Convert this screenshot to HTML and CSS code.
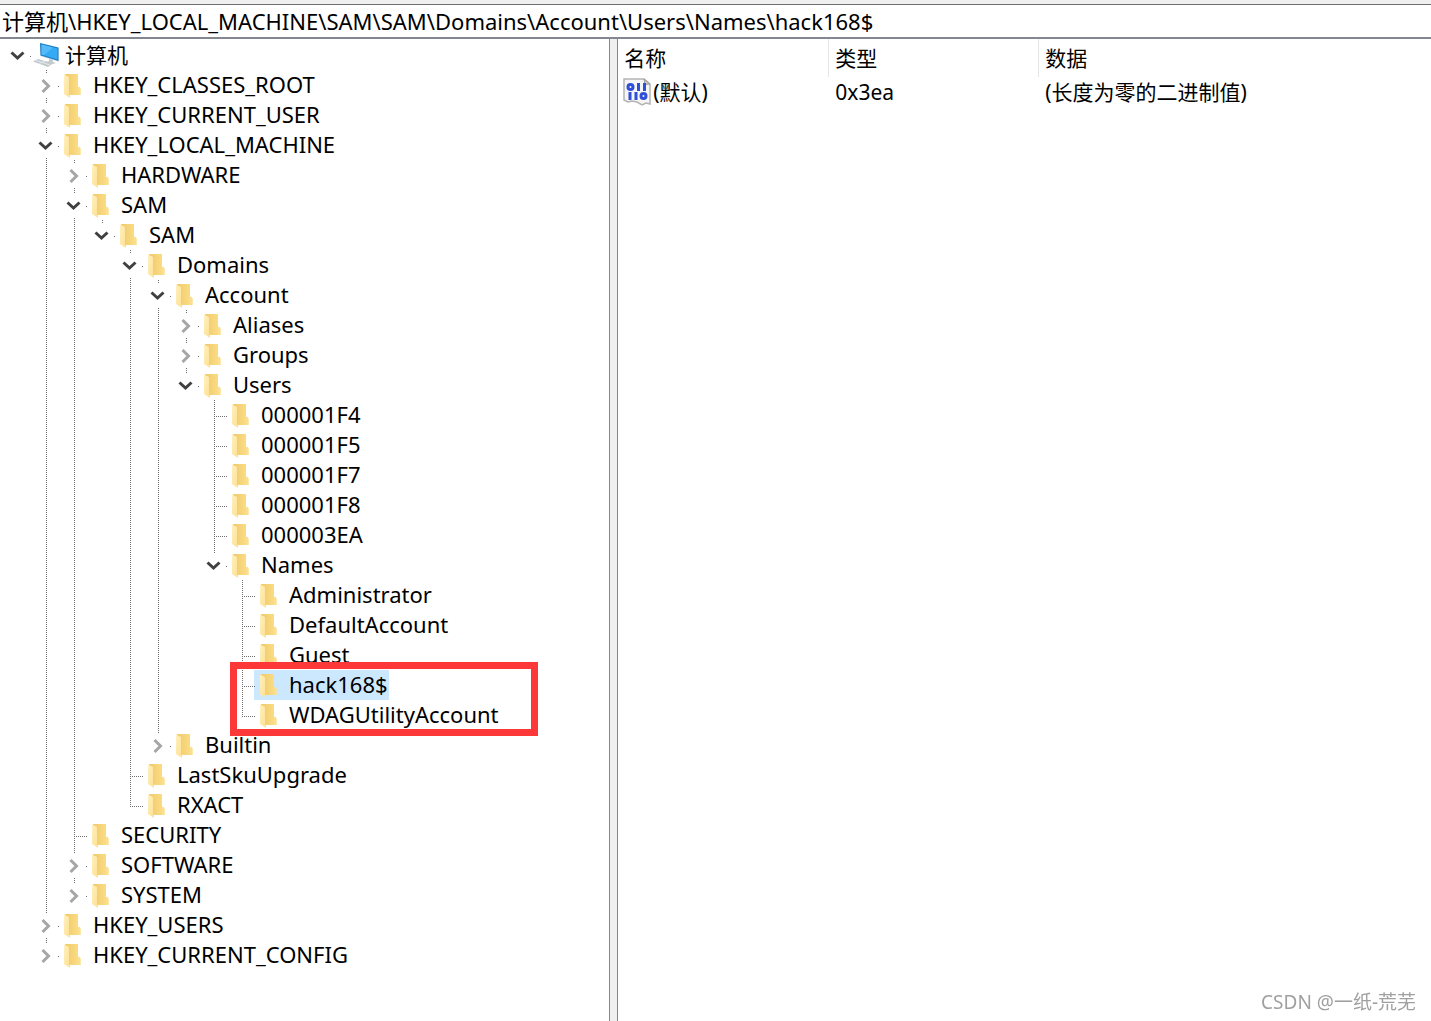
FILE: index.html
```html
<!DOCTYPE html>
<html lang="zh-CN">
<head>
    <meta charset="UTF-8">
    <meta name="viewport" content="width=device-width, initial-scale=1.0">
    <title>注册表编辑器</title>
    <link rel="stylesheet" href="styles.css">
</head>
<body>
    <svg class="sprite" aria-hidden="true">
        <defs>
            <linearGradient id="front" x1="0" y1="0" x2="1" y2="1">
                <stop offset="0" stop-color="#fff0bd"/>
                <stop offset="1" stop-color="#fde092"/>
            </linearGradient>
            <linearGradient id="back" x1="0" y1="0" x2="1" y2="0">
                <stop offset="0" stop-color="#efc96c"/>
                <stop offset="1" stop-color="#fde088"/>
            </linearGradient>
        </defs>
        <symbol id="folder" viewBox="0 0 17 24">
            <path fill="url(#back)" d="M1 0H14V12.500L16.500 15V21H4Z"/>
            <path fill="#fbdf90" d="M14 14L15 12.500L16.500 14V21H14Z"/>
            <path fill="url(#front)" d="M0 .5L5 3V20.500L6 21V24L0 20Z"/>
        </symbol>
        <symbol id="open" viewBox="0 0 24 24">
            <path fill="none" stroke="#404040" stroke-width="3" d="M5.500 8.500L11.500 14L17.500 8.500"/>
        </symbol>
        <symbol id="closed" viewBox="0 0 24 24">
            <path fill="none" stroke="#a6a6a6" stroke-width="3" d="M8.500 6L14.500 12L8.500 18"/>
        </symbol>
        <symbol id="computer" viewBox="0 0 26 25">
            <path fill="#dde3e6" d="M7 0L26 5V19L7 13Z"/>
            <path fill="#1d7fc4" d="M7 0L25.500 4.500V18L7.500 12.500Z"/>
            <path fill="#35aaf5" d="M8.500 1.500L24.500 5.500V16.500L8.500 11.500Z"/>
            <path fill="#55bafa" d="M8.500 1.500L20 4.500L11 12.200L8.500 11.500Z"/>
            <path fill="#c3cbcf" d="M16 15.500L20 17V19L23 20L20 21L13 19L16 18Z"/>
            <path fill="#c0c8cc" d="M0 18.500L5 16L20 20.500L15 24Z"/>
            <path fill="none" stroke="#e4e8ea" stroke-width="1" d="M3 17.500L17 22M6 20.500L12 18"/>
        </symbol>
        <symbol id="binary" viewBox="0 0 28 28">
            <path fill="#f5f5f5" stroke="#b4b4b4" stroke-width="1.500" d="M1 1H21L27 6V26L23 25L19 27L14 24L9 23L5 24L1 22Z"/>
            <path fill="#c6c6c6" stroke="#9a9a9a" d="M21 1L22 6.500L27 6Z"/>
            <g fill="none" stroke="#2f4fd8" stroke-width="3">
                <ellipse cx="7.500" cy="9" rx="2.500" ry="2.500"/>
                <path d="M15.500 5V13M21.500 5V13M7 14V22M13 14V22"/>
                <ellipse cx="20.500" cy="18" rx="2.500" ry="2.500"/>
            </g>
        </symbol>
    </svg>

    <div class="window">
        <input class="address" type="text" aria-label="地址" value="计算机\HKEY_LOCAL_MACHINE\SAM\SAM\Domains\Account\Users\Names\hack168$">

        <div class="panes">
            <nav class="tree">
                <ul>
                    <li class="root">
                        <div class="row"><button class="toggle" aria-label="计算机"><svg><use href="#open"/></svg></button><span class="label"><svg class="computer"><use href="#computer"/></svg>计算机</span></div>
                        <ul>
                            <li><div class="row"><button class="toggle" aria-label="HKEY_CLASSES_ROOT"><svg><use href="#closed"/></svg></button><span class="label"><svg class="folder"><use href="#folder"/></svg>HKEY_CLASSES_ROOT</span></div></li>
                            <li><div class="row"><button class="toggle" aria-label="HKEY_CURRENT_USER"><svg><use href="#closed"/></svg></button><span class="label"><svg class="folder"><use href="#folder"/></svg>HKEY_CURRENT_USER</span></div></li>
                            <li>
                                <div class="row"><button class="toggle" aria-label="HKEY_LOCAL_MACHINE"><svg><use href="#open"/></svg></button><span class="label"><svg class="folder"><use href="#folder"/></svg>HKEY_LOCAL_MACHINE</span></div>
                                <ul>
                                    <li><div class="row"><button class="toggle" aria-label="HARDWARE"><svg><use href="#closed"/></svg></button><span class="label"><svg class="folder"><use href="#folder"/></svg>HARDWARE</span></div></li>
                                    <li>
                                        <div class="row"><button class="toggle" aria-label="SAM"><svg><use href="#open"/></svg></button><span class="label"><svg class="folder"><use href="#folder"/></svg>SAM</span></div>
                                        <ul>
                                            <li>
                                                <div class="row"><button class="toggle" aria-label="SAM"><svg><use href="#open"/></svg></button><span class="label"><svg class="folder"><use href="#folder"/></svg>SAM</span></div>
                                                <ul>
                                                    <li>
                                                        <div class="row"><button class="toggle" aria-label="Domains"><svg><use href="#open"/></svg></button><span class="label"><svg class="folder"><use href="#folder"/></svg>Domains</span></div>
                                                        <ul>
                                                            <li>
                                                                <div class="row"><button class="toggle" aria-label="Account"><svg><use href="#open"/></svg></button><span class="label"><svg class="folder"><use href="#folder"/></svg>Account</span></div>
                                                                <ul>
                                                                    <li><div class="row"><button class="toggle" aria-label="Aliases"><svg><use href="#closed"/></svg></button><span class="label"><svg class="folder"><use href="#folder"/></svg>Aliases</span></div></li>
                                                                    <li><div class="row"><button class="toggle" aria-label="Groups"><svg><use href="#closed"/></svg></button><span class="label"><svg class="folder"><use href="#folder"/></svg>Groups</span></div></li>
                                                                    <li>
                                                                        <div class="row"><button class="toggle" aria-label="Users"><svg><use href="#open"/></svg></button><span class="label"><svg class="folder"><use href="#folder"/></svg>Users</span></div>
                                                                        <ul>
                                                                            <li><div class="row leaf"><span class="label"><svg class="folder"><use href="#folder"/></svg>000001F4</span></div></li>
                                                                            <li><div class="row leaf"><span class="label"><svg class="folder"><use href="#folder"/></svg>000001F5</span></div></li>
                                                                            <li><div class="row leaf"><span class="label"><svg class="folder"><use href="#folder"/></svg>000001F7</span></div></li>
                                                                            <li><div class="row leaf"><span class="label"><svg class="folder"><use href="#folder"/></svg>000001F8</span></div></li>
                                                                            <li><div class="row leaf"><span class="label"><svg class="folder"><use href="#folder"/></svg>000003EA</span></div></li>
                                                                            <li>
                                                                                <div class="row"><button class="toggle" aria-label="Names"><svg><use href="#open"/></svg></button><span class="label"><svg class="folder"><use href="#folder"/></svg>Names</span></div>
                                                                                <ul>
                                                                                    <li><div class="row leaf"><span class="label"><svg class="folder"><use href="#folder"/></svg>Administrator</span></div></li>
                                                                                    <li><div class="row leaf"><span class="label"><svg class="folder"><use href="#folder"/></svg>DefaultAccount</span></div></li>
                                                                                    <li><div class="row leaf"><span class="label"><svg class="folder"><use href="#folder"/></svg>Guest</span></div></li>
                                                                                    <li><div class="row leaf"><span class="label selected"><svg class="folder"><use href="#folder"/></svg>hack168$</span></div><div class="marker"></div></li>
                                                                                    <li><div class="row leaf"><span class="label"><svg class="folder"><use href="#folder"/></svg>WDAGUtilityAccount</span></div></li>
                                                                                </ul>
                                                                            </li>
                                                                        </ul>
                                                                    </li>
                                                                </ul>
                                                            </li>
                                                            <li><div class="row"><button class="toggle" aria-label="Builtin"><svg><use href="#closed"/></svg></button><span class="label"><svg class="folder"><use href="#folder"/></svg>Builtin</span></div></li>
                                                        </ul>
                                                    </li>
                                                    <li><div class="row leaf"><span class="label"><svg class="folder"><use href="#folder"/></svg>LastSkuUpgrade</span></div></li>
                                                    <li><div class="row leaf"><span class="label"><svg class="folder"><use href="#folder"/></svg>RXACT</span></div></li>
                                                </ul>
                                            </li>
                                        </ul>
                                    </li>
                                    <li><div class="row leaf"><span class="label"><svg class="folder"><use href="#folder"/></svg>SECURITY</span></div></li>
                                    <li><div class="row"><button class="toggle" aria-label="SOFTWARE"><svg><use href="#closed"/></svg></button><span class="label"><svg class="folder"><use href="#folder"/></svg>SOFTWARE</span></div></li>
                                    <li><div class="row"><button class="toggle" aria-label="SYSTEM"><svg><use href="#closed"/></svg></button><span class="label"><svg class="folder"><use href="#folder"/></svg>SYSTEM</span></div></li>
                                </ul>
                            </li>
                            <li><div class="row"><button class="toggle" aria-label="HKEY_USERS"><svg><use href="#closed"/></svg></button><span class="label"><svg class="folder"><use href="#folder"/></svg>HKEY_USERS</span></div></li>
                            <li><div class="row"><button class="toggle" aria-label="HKEY_CURRENT_CONFIG"><svg><use href="#closed"/></svg></button><span class="label"><svg class="folder"><use href="#folder"/></svg>HKEY_CURRENT_CONFIG</span></div></li>
                        </ul>
                    </li>
                </ul>
            </nav>

            <div class="splitter"></div>

            <main class="values">
                <table>
                    <colgroup>
                        <col class="col-name">
                        <col class="col-type">
                        <col>
                    </colgroup>
                    <thead>
                        <tr><th>名称</th><th>类型</th><th>数据</th></tr>
                    </thead>
                    <tbody>
                        <tr>
                            <td class="value-cell"><div class="value-name"><svg class="binary"><use href="#binary"/></svg>(默认)</div></td>
                            <td>0x3ea</td>
                            <td>(长度为零的二进制值)</td>
                        </tr>
                    </tbody>
                </table>
            </main>
        </div>
    </div>

    <div class="watermark">CSDN @一纸-荒芜</div>

    <script>
        // 展开 / 折叠子项
        document.querySelectorAll('.toggle').forEach(function(button) {
            button.addEventListener('click', function() {
                const list = button.closest('li').querySelector('ul');
                if (!list) return;
                list.hidden = !list.hidden;
                button.querySelector('use').setAttribute('href', list.hidden ? '#closed' : '#open');
            });
        });
    </script>
</body>
</html>
```

FILE: styles.css
```css
* {
    box-sizing: border-box;
}

body {
    margin: 0;
    background: #fff;
    color: #000;
    font-family: "Noto Sans", "Noto Sans CJK SC", sans-serif;
    font-size: 21px;
    line-height: 30px;
}

svg {
    display: block;
    flex-shrink: 0;
}

.sprite {
    position: absolute;
    width: 0;
    height: 0;
}

.window {
    display: flex;
    flex-direction: column;
    min-height: 100vh;
    border-top: 4px solid #f0f0f0;
}

.address {
    width: 100%;
    height: 33px;
    padding: 0 2px 2px;
    border: 0;
    border-top: 1px solid #6e6e6e;
    background: #fff;
    color: #000;
    font: inherit;
    font-size: 22px;
    outline: none;
}

.panes {
    display: grid;
    grid-template-columns: 3fr 7px 4fr;
    flex: 1;
}

.tree {
    padding-top: 1px;
    border-top: 2px solid #828790;
    border-right: 1px solid #828790;
    font-size: 22px;
    overflow: hidden;
}

.tree ul {
    margin: 0;
    padding: 0;
    list-style: none;
}

.tree li ul {
    padding-left: 28px;
}

.tree li {
    position: relative;
}

/* 连接线 */
.tree li::before {
    content: "";
    position: absolute;
    top: 0;
    bottom: 0;
    left: 18px;
    width: 1px;
    background: repeating-linear-gradient(#707070 0 1px, transparent 1px 2px);
}

.tree li:last-child::before {
    bottom: auto;
    height: 17px;
}

.tree .root::before {
    display: none;
}

.row {
    position: relative;
    display: flex;
    height: 30px;
    padding-left: 6px;
}

.row::after {
    content: "";
    position: absolute;
    top: 16px;
    left: 30px;
    width: 1px;
    height: 1px;
    background: repeating-linear-gradient(to right, #707070 0 1px, transparent 1px 2px);
}

.row.leaf {
    padding-left: 30px;
}

.row.leaf::after {
    left: 18px;
    width: 13px;
}

.toggle {
    width: 24px;
    height: 24px;
    margin-top: 4px;
    padding: 0;
    border: 0;
    background: #fff;
}

.toggle svg {
    width: 24px;
    height: 24px;
}

.label {
    display: flex;
    padding: 0 1px 0 6px;
    line-height: 28px;
    white-space: nowrap;
}

.root > .row .label {
    padding-left: 3px;
    font-size: 21px;
    line-height: 30px;
}

.label.selected {
    background: #cce8ff;
}

.folder {
    width: 17px;
    height: 24px;
    margin: 4px 12px 0 0;
}

.computer {
    width: 26px;
    height: 25px;
    margin: 3px 6px 0 0;
}

.marker {
    position: absolute;
    top: -8px;
    left: 6px;
    z-index: 1;
    width: 308px;
    height: 74px;
    border: 7px solid #fc3838;
}

.splitter {
    background: #f0f0f0;
    border-top: 2px solid #828790;
    cursor: col-resize;
}

.values {
    border-top: 2px solid #828790;
    border-left: 1px solid #828790;
}

table {
    width: 100%;
    border-collapse: separate;
    border-spacing: 0;
    table-layout: fixed;
}

.col-name {
    width: 211px;
}

.col-type {
    width: 210px;
}

th,
td {
    padding: 0 6px;
    text-align: left;
    font-weight: normal;
    white-space: nowrap;
}

th {
    height: 38px;
    border-right: 1px solid #e5e5e5;
}

th:last-child {
    border-right: 0;
}

.value-cell {
    padding-left: 5px;
}

.value-name {
    display: flex;
    align-items: center;
}

.binary {
    width: 28px;
    height: 28px;
    margin-right: 2px;
}

.watermark {
    position: fixed;
    right: 15px;
    bottom: 4px;
    color: #a0a0a0;
    font-size: 19px;
}
```
